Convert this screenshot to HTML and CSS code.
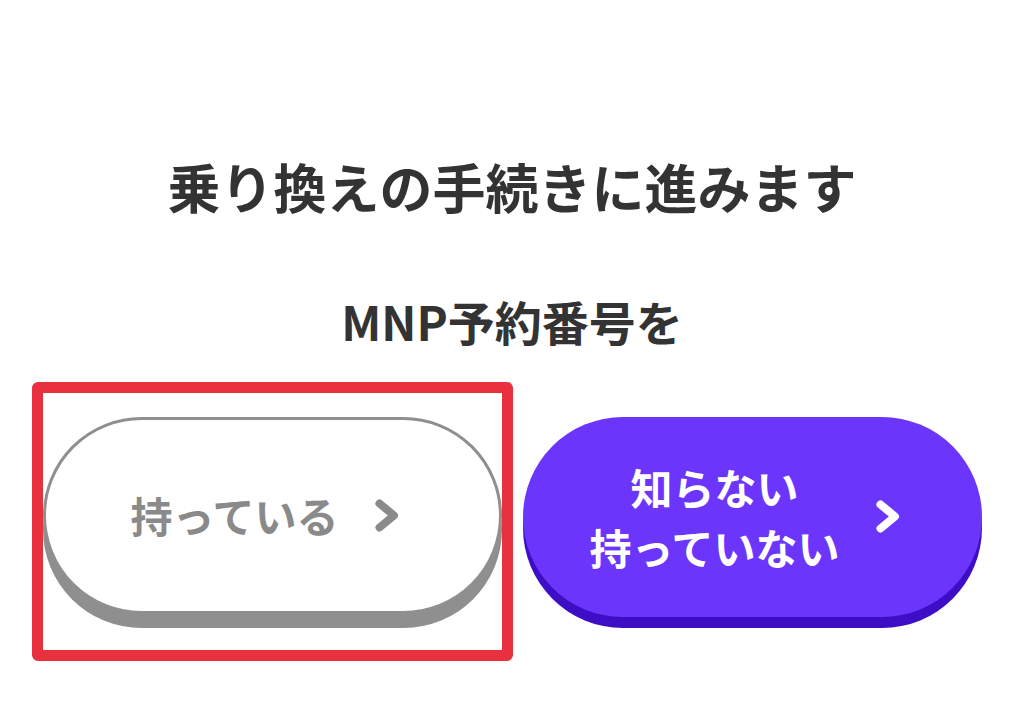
FILE: index.html
```html
<!DOCTYPE html>
<html lang="ja">
<head>
    <meta charset="UTF-8">
    <meta name="viewport" content="width=device-width, initial-scale=1.0">
    <title>乗り換えの手続き</title>
    <link rel="stylesheet" href="styles.css">
</head>
<body>
    <div class="container">
        <h1>乗り換えの手続きに進みます</h1>
        <p class="subtitle">MNP予約番号を</p>

        <div class="choices">
            <button class="choice choice-have highlighted">
                <span class="choice-label">持っている</span>
                <svg class="chevron" width="24" height="33" viewBox="0 0 24 33"><polyline points="4.5,4.5 19,16.5 4.5,28.5"/></svg>
            </button>
            <button class="choice choice-none">
                <span class="choice-label">知らない<br>持っていない</span>
                <svg class="chevron" width="24" height="33" viewBox="0 0 24 33"><polyline points="4.5,4.5 19,16.5 4.5,28.5"/></svg>
            </button>
        </div>
    </div>
</body>
</html>
```

FILE: styles.css
```css
body {
    font-family: "Noto Sans CJK JP", "Noto Sans", sans-serif;
    margin: 0;
    background-color: #fff;
    color: #333;
}
.container {
    display: flex;
    flex-direction: column;
    align-items: center;
    padding-bottom: 80px;
}
h1 {
    font-size: 53px;
    font-weight: 700;
    line-height: 1.2;
    margin: 155px 0 0;
}
p.subtitle {
    font-size: 47px;
    font-weight: 700;
    line-height: 1.2;
    margin: 74px 0 0;
}
.choices {
    display: flex;
    gap: 21px;
    margin-top: 68px;
}
.choice {
    position: relative;
    width: 459px;
    box-sizing: border-box;
    border-radius: 100px;
    font-family: inherit;
    font-size: 42px;
    font-weight: 700;
    display: flex;
    align-items: center;
    justify-content: center;
    gap: 37px;
    padding: 0 14px 0 0;
    cursor: pointer;
}
.choice-label {
    text-align: center;
    line-height: 60px;
}
.chevron polyline {
    fill: none;
    stroke: currentColor;
    stroke-width: 8;
    stroke-linecap: round;
    stroke-linejoin: round;
}
.choice-have {
    height: 197px;
    background-color: #fff;
    border: 3px solid #8f8f8f;
    box-shadow: 0 14px 0 #8f8f8f;
    color: #8a8a8a;
}
.choice-none {
    height: 200px;
    background-color: #6c35fc;
    border: none;
    box-shadow: 0 11px 0 #3d0ec6;
    color: #fff;
}
/* red marker drawn around the selected choice */
.highlighted::after {
    content: "";
    position: absolute;
    top: -38px;
    left: -14px;
    right: -14px;
    bottom: -50px;
    border: 11px solid #e8303f;
    border-radius: 6px;
    pointer-events: none;
}
```
